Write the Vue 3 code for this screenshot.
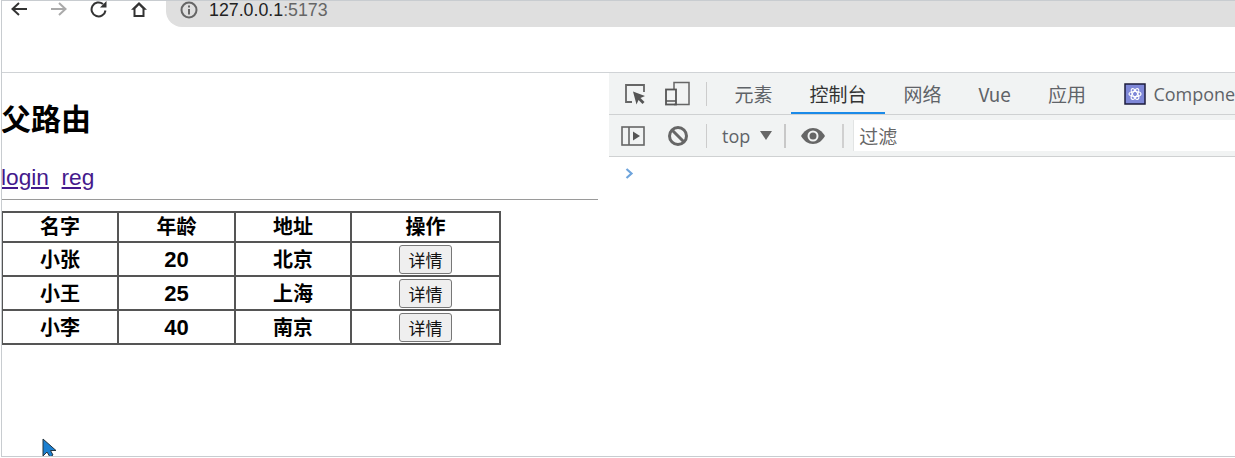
<script setup>
const rows = [
  ['小张', 20, '北京'],
  ['小王', 25, '上海'],
  ['小李', 40, '南京'],
]
const tabs = ['元素', '控制台', '网络', 'Vue', '应用']
</script>

<template>
  <div class="frame">
    <header class="browser">
      <div class="nav">
        <svg width="18" height="18" viewBox="0 0 18 18"><path d="M17 8H3M9 2 2.500 8 9 14" fill="none" stroke="#333" stroke-width="2"/></svg>
        <svg width="18" height="18" viewBox="0 0 18 18"><path d="M1 8h14M9 2l6.500 6L9 14" fill="none" stroke="#aaa" stroke-width="2"/></svg>
        <svg width="18" height="18" viewBox="0 0 18 18"><path d="M15.500 9.500A7 7 0 1 1 13 3" fill="none" stroke="#333" stroke-width="2"/><path d="M16.500 0v6.500H10z" fill="#333"/></svg>
        <svg width="18" height="18" viewBox="0 0 18 18"><path d="M9 1 1 8.700h2.500V16h11V8.700H17zM5.500 14V7.700L9 4.200l3.500 3.500V14z" fill="#333" fill-rule="evenodd"/></svg>
      </div>
      <div class="address">
        <svg width="18" height="18" viewBox="0 0 18 18"><circle cx="9" cy="9" r="7.500" fill="none" stroke="#666" stroke-width="2"/><path d="M9 8v5.500M9 4.500v2" stroke="#666" stroke-width="2"/></svg>
        <span class="url"><span class="host">127.0.0.1</span>:5173</span>
      </div>
    </header>

    <main class="split">
      <section class="page">
        <h1>父路由</h1>
        <p class="links"><a href="#">login</a>&nbsp;&nbsp;<a href="#">reg</a></p>
        <hr />
        <table>
          <thead>
            <tr><th class="c1">名字</th><th class="c2">年龄</th><th class="c3">地址</th><th>操作</th></tr>
          </thead>
          <tbody>
            <tr v-for="r in rows" :key="r[0]">
              <th class="txt">{{ r[0] }}</th><th class="txt num">{{ r[1] }}</th><th class="txt">{{ r[2] }}</th>
              <th><button type="button">详情</button></th>
            </tr>
          </tbody>
        </table>
        <svg class="cursor" width="15" height="20" viewBox="0 0 15 20"><path d="M1 1v17l4-4 3 5 3-2-2.500-4.500H14z" fill="#1b7fd0" stroke="#24343f" stroke-width="1"/></svg>
      </section>

      <aside class="devtools">
        <div class="tabbar">
          <svg class="tool first" width="24" height="24" viewBox="0 0 24 24"><path d="M9 20H3V3h18v7" fill="none" stroke="#666" stroke-width="1.800"/><path d="M10 9.500 22 14l-4.500 2 4 4-2 2-4-4-2 4.500z" fill="#555"/></svg>
          <svg class="tool" width="26" height="26" viewBox="0 0 26 26"><path d="M9 8V1.500h15v22H9" fill="none" stroke="#666" stroke-width="1.500"/><rect x="1" y="8.500" width="10" height="15" fill="none" stroke="#555" stroke-width="1.800"/><path d="M1 20h10" stroke="#555" stroke-width="1.500"/></svg>
          <span class="sep tab-sep"></span>
          <span v-for="t in tabs" :key="t" class="tab" :class="{ active: t === '控制台' }">{{ t }}</span>
          <span class="tab comp">
            <svg width="22" height="22" viewBox="0 0 22 22"><rect x="1" y="1" width="20" height="20" fill="#7f88d8" stroke="#1c1c3c" stroke-width="1.500"/><g fill="none" stroke="#fff" stroke-width="1.200"><ellipse cx="11" cy="11" rx="6" ry="2.500"/><ellipse cx="11" cy="11" rx="6" ry="2.500" transform="rotate(60 11 11)"/><ellipse cx="11" cy="11" rx="6" ry="2.500" transform="rotate(120 11 11)"/></g></svg>
            Compone
          </span>
        </div>
        <div class="toolbar">
          <svg class="bar-first" width="24" height="20" viewBox="0 0 24 20"><rect x="1" y="1" width="22" height="18" fill="none" stroke="#666" stroke-width="1.600"/><path d="M8 1v18" stroke="#666" stroke-width="1.600"/><path d="M12 5.500v9l7-4.500z" fill="#555"/></svg>
          <svg class="ban" width="22" height="22" viewBox="0 0 22 22"><circle cx="11" cy="11" r="8.500" fill="none" stroke="#666" stroke-width="3"/><path d="m5 5 12 12" stroke="#666" stroke-width="3"/></svg>
          <span class="sep s1"></span>
          <span class="top">top</span>
          <span class="caret"></span>
          <span class="sep s2"></span>
          <svg class="eye" width="26" height="18" viewBox="0 0 26 18"><path d="M1 9c3-5 7-8 12-8s9 3 12 8c-3 5-7 8-12 8S4 14 1 9z" fill="#666"/><circle cx="13" cy="9" r="5.500" fill="#f1f3f3"/><circle cx="13" cy="9" r="3.500" fill="#666"/></svg>
          <span class="sep s3"></span>
          <div class="filter">过滤</div>
        </div>
        <div class="console">
          <svg width="9" height="11" viewBox="0 0 9 11"><path d="m1.500 1 5 4.500-5 4.500" fill="none" stroke="#6ea4dc" stroke-width="2.200"/></svg>
        </div>
      </aside>
    </main>
  </div>
</template>

<style scoped>
svg { flex: none; display: block; }
.frame {
  box-sizing: border-box;
  width: 1234px;
  height: 457px;
  margin-left: 1px;
  border-left: 1px solid #c8ccd0;
  border-top: 1px solid #c8ccd0;
  border-bottom: 1px solid #c8ccd0;
  overflow: hidden;
  background: #fff;
  display: flex;
  flex-direction: column;
  font-family: "Liberation Sans", "Noto Sans CJK SC", sans-serif;
}
.browser {
  height: 71px;
  flex: none;
  border-bottom: 1px solid #d0d3d6;
  display: flex;
  align-items: flex-start;
  box-sizing: content-box;
}
.nav {
  display: flex;
  gap: 22px;
  padding-left: 8px;
  width: 157px;
  box-sizing: border-box;
}
.address {
  flex: 1;
  height: 26px;
  background: #dfdfdf;
  border-bottom-left-radius: 16px;
  display: flex;
  align-items: flex-start;
  gap: 11px;
  padding-left: 14px;
  margin-left: 7px;
}
.url {
  font-family: "Liberation Sans", sans-serif;
  font-size: 17.800px;
  line-height: 16px;
  margin-top: 1px;
  color: #666;
}
.host { color: #222; }
.split {
  flex: 1;
  display: flex;
  min-height: 0;
}
.page {
  width: 608px;
  margin-left: -1px;
  flex: none;
  position: relative;
  color: #000;
}
h1 {
  margin: 28px 0 0;
  font-size: 30px;
  line-height: 38px;
  font-weight: 700;
}
.links {
  margin: 25px 0 0;
  font-size: 22.700px;
  line-height: 26px;
}
.links a { color: #44198c; }
hr {
  margin: 9px 11px 0 0;
  height: 1px;
  border: 0;
  background: #9a9a9a;
}
table {
  margin-top: 11px;
  width: 500px;
  border-collapse: collapse;
  table-layout: fixed;
  border: 2px solid #555;
}
th {
  box-sizing: border-box;
  border: 2px solid #555;
  padding: 0;
  height: 30px;
  font-size: 20px;
  line-height: 24px;
  font-weight: 700;
  text-align: center;
}
tbody th { height: 34px; }
th.txt { padding-top: 2px; }
th.num { font-size: 22px; }
.c1 { width: 116px; }
.c2 { width: 117px; }
.c3 { width: 116px; }
button {
  display: block;
  margin: 0 auto;
  width: 53px;
  height: 29px;
  padding: 0;
  box-sizing: border-box;
  background: #efefef;
  border: 1px solid #777;
  border-radius: 3px;
  font: 400 17px/1 "Noto Sans CJK SC", sans-serif;
  color: #111;
}
.cursor {
  position: absolute;
  left: 41px;
  bottom: -2px;
}
.devtools {
  flex: 1;
  min-width: 0;
  display: flex;
  flex-direction: column;
  color: #5f6368;
}
.tabbar {
  height: 42px;
  flex: none;
  box-sizing: border-box;
  background: #f1f3f3;
  border-bottom: 1px solid #cfd1d2;
  display: flex;
  align-items: center;
  white-space: nowrap;
  overflow: hidden;
}
.tool.first { margin-left: 14px; }
.tool + .tool { margin-left: 18px; }
.sep {
  width: 1px;
  height: 24px;
  background: #ccc;
  flex: none;
}
.tab-sep { margin-left: 15px; margin-right: 9px; }
.tab {
  height: 41px;
  line-height: 42px;
  padding: 0 18.500px;
  font-size: 19px;
  font-family: "Noto Sans CJK SC", "Liberation Sans", sans-serif;
  font-weight: 400;
  box-sizing: border-box;
  flex: none;
}
.tab.active {
  color: #333;
  border-bottom: 2px solid #1a8ae8;
}
.comp {
  display: flex;
  align-items: center;
  gap: 7px;
  padding-left: 20px;
  font-family: "Open Sans", "Noto Sans CJK SC", sans-serif;
  font-size: 18px;
}
.toolbar {
  height: 42px;
  flex: none;
  box-sizing: border-box;
  background: #f1f3f3;
  border-bottom: 1px solid #cfd1d2;
  display: flex;
  align-items: center;
}
.bar-first { margin-left: 12px; }
.ban { margin-left: 22px; }
.s1 { margin-left: 17px; }
.top {
  margin-left: 15px;
  font-size: 18px;
  font-family: "Open Sans", sans-serif;
}
.caret {
  margin-left: 10px;
  width: 0;
  height: 0;
  border-left: 6px solid transparent;
  border-right: 6px solid transparent;
  border-top: 9px solid #666;
}
.s2 { margin-left: 12px; width: 2px; background: #c8c8c8; }
.eye { margin-left: 14px; }
.s3 { margin-left: 16px; width: 2px; background: #d0d0d0; }
.filter {
  flex: 1;
  height: 31px;
  margin-left: 9px;
  padding-left: 5px;
  border-left: 1px solid #e2e4e4;
  background: #fff;
  font-size: 19px;
  line-height: 32px;
  font-family: "Noto Sans CJK SC", sans-serif;
  color: #666;
}
.console {
  flex: 1;
  padding: 11px 0 0 16px;
}
</style>
